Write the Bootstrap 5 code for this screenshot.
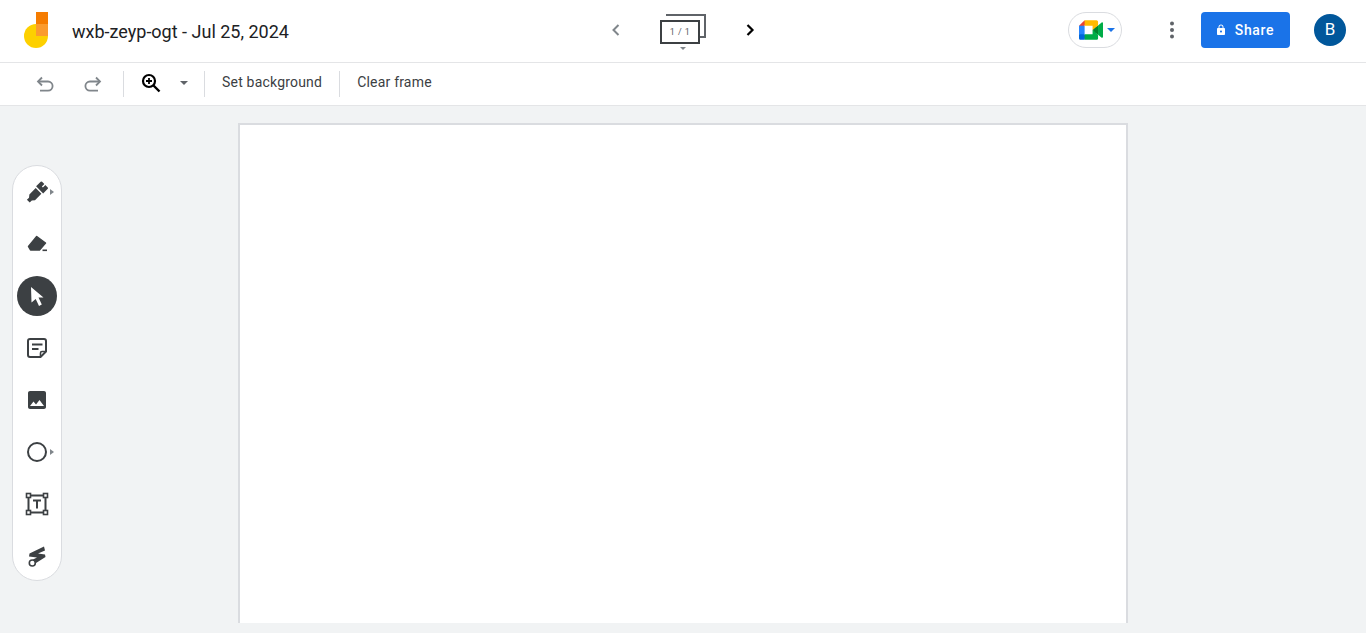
<!DOCTYPE html>
<html lang="en">
<head>
    <meta charset="UTF-8">
    <meta name="viewport" content="width=device-width, initial-scale=1.0">
    <title>wxb-zeyp-ogt - Jul 25, 2024</title>
    <link rel="stylesheet" href="https://cdn.jsdelivr.net/npm/bootstrap@5.3.0/dist/css/bootstrap.min.css">
    <style>
        html, body {
            height: 100%;
            overflow: hidden;
        }
        body {
            font-family: Roboto, "Liberation Sans", sans-serif;
            background: #f1f3f4;
            color: #3c4043;
        }
        .page-wrap {
            height: 633px;
        }
        .top-bar {
            height: 63px;
            padding-bottom: 2px;
            background: #fff;
            border-bottom: 1px solid #e4e5e7;
        }
        .top-side {
            flex: 1 1 0;
        }
        .app-logo {
            margin-left: 24px;
        }
        .doc-title {
            margin-left: 24px;
            font-size: 18px;
            color: #202124;
            padding-top: 2px;
        }
        .frame-nav {
            gap: 38px;
            width: 146px;
        }
        .frame-stack {
            position: relative;
            width: 46px;
            height: 36px;
        }
        .frame-back {
            position: absolute;
            left: 6px;
            top: 2px;
            width: 40px;
            height: 24px;
            border-top: 2px solid #5f6368;
            border-right: 2px solid #5f6368;
            border-bottom: 2px solid #5f6368;
        }
        .frame-front {
            position: absolute;
            left: 0;
            top: 8px;
            width: 40px;
            height: 24px;
            border: 2px solid #3c4043;
            background: #fff;
            font-size: 9px;
            line-height: 20px;
            text-align: center;
            color: #5f6368;
            letter-spacing: .4px;
        }
        .frame-caret {
            position: absolute;
            left: 20px;
            top: 35px;
            border-left: 3px solid transparent;
            border-right: 3px solid transparent;
            border-top: 3px solid #80868b;
        }
        .meet-pill {
            width: 54px;
            height: 36px;
            border: 1px solid #dadce0;
            border-radius: 18px;
            margin-right: 42px;
            padding-left: 10px;
        }
        .menu-dots {
            margin-right: 21px;
        }
        .share-btn {
            width: 89px;
            height: 36px;
            padding: 0 2px 0 0;
            border: 0;
            border-radius: 4px;
            background: #1a73e8;
            font-size: 14px;
            font-weight: 500;
            letter-spacing: .65px;
            gap: 8px;
        }
        .user-mark {
            width: 32px;
            height: 32px;
            margin-left: 24px;
            margin-right: 20px;
            background: #01579b;
            color: #fff;
            font-size: 17px;
        }
        .tool-bar {
            height: 43px;
            background: #fff;
            border-bottom: 1px solid #e4e5e7;
            font-size: 14px;
            color: #3c4043;
            letter-spacing: .2px;
        }
        .tool-undo {
            margin-left: 33px;
        }
        .tool-redo {
            margin-left: 24px;
        }
        .tool-sep-first {
            margin-left: 18px;
        }
        .tool-zoom {
            margin-left: 17px;
            margin-top: -2px;
        }
        .tool-caret {
            margin-left: 19px;
            margin-right: 16px;
            margin-top: -2px;
            border-left: 4px solid transparent;
            border-right: 4px solid transparent;
            border-top: 4px solid #5f6368;
        }
        .tool-sep {
            width: 1px;
            height: 26px;
            background: #dadce0;
        }
        .tool-label {
            padding: 0 17px 4px;
        }
        .stage {
            position: relative;
            height: 527px;
            padding-top: 17px;
        }
        .board {
            width: 890px;
            height: 500px;
            margin: 0 auto;
            background: #fff;
            border: 2px solid #dadce0;
            border-bottom: 0;
        }
        .tool-rail {
            position: absolute;
            left: 12px;
            top: 59px;
            width: 50px;
            height: 416px;
            background: #fff;
            border: 1px solid #dadce0;
            border-radius: 25px;
        }
        .rail-item {
            position: relative;
            height: 52px;
            margin-left: -1px;
        }
        .rail-item.active-tool::before {
            content: "";
            position: absolute;
            left: 5px;
            top: 6px;
            width: 40px;
            height: 40px;
            border-radius: 50%;
            background: #3c4043;
        }
        .rail-item svg {
            position: relative;
        }
        .rail-more {
            position: absolute;
            left: 38px;
            top: 23px;
            border-top: 3px solid transparent;
            border-bottom: 3px solid transparent;
            border-left: 4px solid #80868b;
        }
    </style>
</head>
<body>
    <div class="page-wrap d-flex flex-column">

        <!-- header -->
        <header class="top-bar d-flex align-items-center flex-shrink-0">
            <div class="top-side d-flex align-items-center">
                <svg class="app-logo" width="24" height="36" viewBox="0 0 24 36">
                    <circle cx="12" cy="24" r="12" fill="#fdd000"/>
                    <rect x="12" y="0" width="12" height="12" fill="#f57c00"/>
                    <rect x="12" y="12" width="12" height="12" fill="#fb9b2d"/>
                </svg>
                <div class="doc-title">wxb-zeyp-ogt - Jul 25, 2024</div>
            </div>

            <div class="frame-nav d-flex align-items-center">
                <svg width="12" height="14" viewBox="0 0 12 14" class="flex-shrink-0"><path d="M8.500 2 3.500 7l5 5" fill="none" stroke="#80868b" stroke-width="2"/></svg>
                <div class="frame-stack flex-shrink-0">
                    <div class="frame-back"></div>
                    <div class="frame-front">1 / 1</div>
                    <div class="frame-caret"></div>
                </div>
                <svg width="12" height="14" viewBox="0 0 12 14" class="flex-shrink-0"><path d="M3.500 2l5 5-5 5" fill="none" stroke="#000" stroke-width="2.200"/></svg>
            </div>

            <div class="top-side d-flex align-items-center justify-content-end">
                <div class="meet-pill d-flex align-items-center gap-1 bg-white">
                    <svg width="24" height="20" viewBox="0 0 87.5 72">
                        <path fill="#00832d" d="M49.5 36l8.53 9.75 11.47 7.33 2-17.02-2-16.64-11.69 6.44z"/>
                        <path fill="#0066da" d="M0 51.5V66c0 3.315 2.685 6 6 6h14.5l3-10.96-3-9.54-9.95-3z"/>
                        <path fill="#e94235" d="M20.5 0L0 20.5l10.55 3 9.95-3 2.95-9.41z"/>
                        <path fill="#2684fc" d="M20.5 20.5H0v31h20.5z"/>
                        <path fill="#00ac47" d="M82.6 8.68L69.5 19.42v33.66l13.16 10.79c1.97 1.54 4.85.135 4.85-2.37V11c0-2.535-2.945-3.925-4.91-2.32zM49.5 36v15.5h-29V72h43c3.315 0 6-2.685 6-6V53.08z"/>
                        <path fill="#ffba00" d="M63.5 0h-43v20.5h29V36l20-16.57V6c0-3.315-2.685-6-6-6z"/>
                    </svg>
                    <svg width="8" height="4" viewBox="0 0 8 4" class="flex-shrink-0"><path d="M0 0h8L4 4z" fill="#1a73e8"/></svg>
                </div>
                <svg class="menu-dots" width="16" height="20" viewBox="0 0 16 20" fill="#5f6368">
                    <circle cx="8" cy="3.500" r="2"/><circle cx="8" cy="10" r="2"/><circle cx="8" cy="16.500" r="2"/>
                </svg>
                <button type="button" class="btn btn-primary share-btn d-flex align-items-center justify-content-center">
                    <svg width="12" height="12" viewBox="0 0 24 24" fill="#fff"><path d="M18 8h-1V6c0-2.760-2.240-5-5-5S7 3.240 7 6v2H6c-1.100 0-2 .9-2 2v10c0 1.100.9 2 2 2h12c1.100 0 2-.9 2-2V10c0-1.100-.9-2-2-2zm-6 9c-1.100 0-2-.9-2-2s.9-2 2-2 2 .9 2 2-.9 2-2 2zm3.100-9H8.900V6c0-1.710 1.390-3.100 3.100-3.100s3.100 1.390 3.100 3.100v2z"/></svg>
                    Share
                </button>
                <div class="user-mark rounded-circle d-flex align-items-center justify-content-center">B</div>
            </div>
        </header>

        <!-- toolbar -->
        <div class="tool-bar d-flex align-items-center flex-shrink-0">
            <svg class="tool-undo" width="24" height="24" viewBox="0 0 24 24" fill="none" stroke="#80868b" stroke-width="1.800"><path d="M9 5.500 5 9.500l4 4"/><path d="M5 9.500h10a4.600 4.600 0 0 1 0 9.200H7"/></svg>
            <svg class="tool-redo" width="24" height="24" viewBox="0 0 24 24" fill="none" stroke="#80868b" stroke-width="1.800"><path d="M15 5.500l4 4-4 4"/><path d="M19 9.500H9a4.600 4.600 0 0 0 0 9.200h8"/></svg>
            <div class="tool-sep tool-sep-first"></div>
            <svg class="tool-zoom" width="20" height="20" viewBox="0 0 20 20" fill="none" stroke="#000"><circle cx="8" cy="8" r="6" stroke-width="2.200"/><path d="M12.500 12.500 18.500 18.500" stroke-width="2.400"/><path d="M8 5v6M5 8h6" stroke-width="1.800"/></svg>
            <div class="tool-caret"></div>
            <div class="tool-sep"></div>
            <div class="tool-label">Set background</div>
            <div class="tool-sep"></div>
            <div class="tool-label">Clear frame</div>
        </div>

        <!-- stage -->
        <main class="stage flex-shrink-0">
            <div class="board"></div>
            <nav class="tool-rail">
                <div class="rail-item d-flex align-items-center justify-content-center">
                    <svg width="24" height="24" viewBox="0 0 24 24" fill="#3c4043"><g transform="rotate(45 12.500 12)"><path d="M8.500 10.500h8v9l-2 2.500v3h-4v-3l-2-2.500z"/><path d="M7.500 2.500a1 1 0 0 1 1-1h8a1 1 0 0 1 1 1v6.500h-10z"/><rect x="11.700" y="0" width="1.400" height="5" fill="#fff"/></g></svg>
                    <span class="rail-more"></span>
                </div>
                <div class="rail-item d-flex align-items-center justify-content-center">
                    <svg width="24" height="24" viewBox="0 0 24 24" fill="#3c4043"><path d="M3.500 14.500 11.700 4.500 20.500 11 14.500 18H5.500z" stroke="#3c4043" stroke-width="1.500" stroke-linejoin="round"/><rect x="17.500" y="17.500" width="4.500" height="1.600"/></svg>
                </div>
                <div class="rail-item active-tool d-flex align-items-center justify-content-center">
                    <svg width="24" height="24" viewBox="0 0 24 24" fill="#fff"><path d="M6 3 18.500 13.500H13.500L16.800 20.500 14 22 10.700 15 6.500 18.500z"/></svg>
                </div>
                <div class="rail-item d-flex align-items-center justify-content-center">
                    <svg width="24" height="24" viewBox="0 0 24 24" fill="none" stroke="#3c4043" stroke-width="2"><path d="M3 5a2 2 0 0 1 2-2h14a2 2 0 0 1 2 2v10.500L15.500 21H5a2 2 0 0 1-2-2z" stroke-linejoin="round"/><path d="M7 8.500h10.500M7 13h6.500"/><path d="M15.500 20v-3a1.500 1.500 0 0 1 1.500-1.500h3" stroke-width="1.600"/></svg>
                </div>
                <div class="rail-item d-flex align-items-center justify-content-center">
                    <svg width="24" height="24" viewBox="0 0 24 24" fill="#3c4043"><path d="M21 19V5c0-1.100-.9-2-2-2H5c-1.100 0-2 .9-2 2v14c0 1.100.9 2 2 2h14c1.100 0 2-.9 2-2zM8.500 13.500l2.500 3.010L14.500 12l4.500 6H5l3.500-4.500z"/></svg>
                </div>
                <div class="rail-item d-flex align-items-center justify-content-center">
                    <svg width="24" height="24" viewBox="0 0 24 24" fill="none" stroke="#3c4043" stroke-width="2"><circle cx="12" cy="12" r="9"/></svg>
                    <span class="rail-more"></span>
                </div>
                <div class="rail-item d-flex align-items-center justify-content-center">
                    <svg width="24" height="24" viewBox="0 0 24 24" fill="none" stroke="#3c4043" stroke-width="1.800"><path d="M3.500 5v14M5 3.500h14M20.500 5v14M5 20.500h14" stroke-width="2"/><rect x="1.500" y="1.500" width="4" height="4" fill="#fff" stroke-width="1.600"/><rect x="18.500" y="1.500" width="4" height="4" fill="#fff" stroke-width="1.600"/><rect x="1.500" y="18.500" width="4" height="4" fill="#fff" stroke-width="1.600"/><rect x="18.500" y="18.500" width="4" height="4" fill="#fff" stroke-width="1.600"/><path d="M8 8.500h8M12 8.500v8" stroke-width="2"/></svg>
                </div>
                <div class="rail-item d-flex align-items-center justify-content-center">
                    <svg width="24" height="24" viewBox="0 0 24 24" fill="#3c4043"><path d="M19 2.500 20 6.500 13 9.500 20 10.500 20.500 13 11 19 8 15.500 12 13.500 4 12.500 4.500 9.500z"/><circle cx="7.300" cy="19" r="3" fill="#fff" stroke="#3c4043" stroke-width="1.600"/></svg>
                </div>
            </nav>
        </main>
    </div>
    <script src="https://cdn.jsdelivr.net/npm/bootstrap@5.3.0/dist/js/bootstrap.bundle.min.js"></script>
</body>
</html>
